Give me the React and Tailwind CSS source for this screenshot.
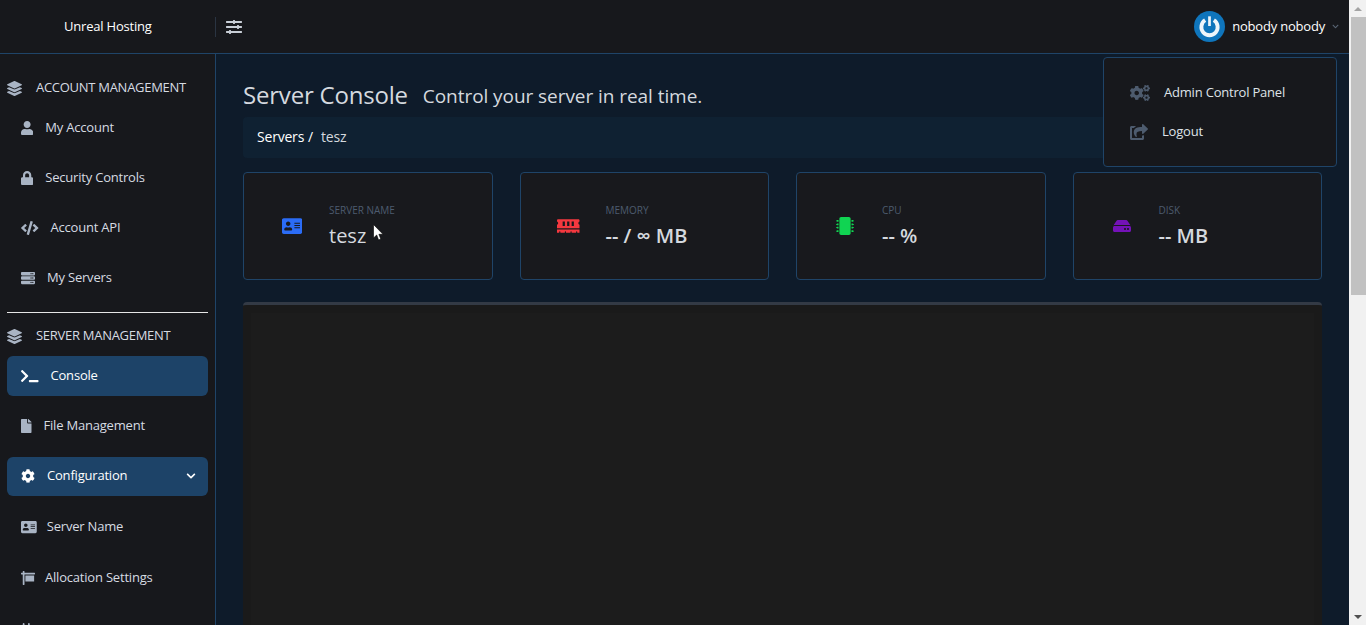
import React from "react";
import {
  FaLayerGroup,
  FaUser,
  FaLock,
  FaCode,
  FaServer,
  FaTerminal,
  FaFile,
  FaCog,
  FaChevronDown,
  FaAddressCard,
  FaSign,
  FaPlug,
  FaSlidersH,
  FaMemory,
  FaMicrochip,
  FaHdd,
  FaCogs,
  FaShareSquare,
} from "react-icons/fa";

const font = { fontFamily: '"Open Sans", sans-serif' };

const NavItem = ({ icon: Icon, label, active, chevron, className, iconClass, gap = "gap-3" }) => (
  <div
    className={`flex items-center ${gap} pl-3.5 pr-3 mx-[7px] rounded-md text-[13px] tracking-[-0.2px] ${
      active ? "bg-[#1d4368] text-white" : "text-[#d6dbe2]"
    } ${className}`}
  >
    <Icon className={`h-3.5 ${iconClass} ${active ? "text-white" : "text-[#a9b4c4]"}`} />
    <span>{label}</span>
    {chevron && <FaChevronDown className="ml-auto h-2.5 w-2.5" />}
  </div>
);

const SectionTitle = ({ label, className }) => (
  <div className={`flex items-center gap-3.5 pl-[7px] text-[13px] tracking-[-0.28px] text-[#d6dbe2] ${className}`}>
    <FaLayerGroup className="h-[15px] w-[15px] text-[#a9b4c4]" />
    <span>{label}</span>
  </div>
);

const StatCard = ({ icon: Icon, color, iconClass, label, value, bold }) => (
  <div className="flex h-[108px] items-center gap-[19px] rounded border border-[#1f4468] bg-[#18191d] pl-[30px]">
    <div className="flex w-[36px] justify-center">
      <Icon className={`shrink-0 ${iconClass} ${color}`} />
    </div>
    <div className="pt-px">
      <div className="text-[10px] leading-[14px] text-[#4d5b6e]">{label}</div>
      <div className={`mt-[5px] text-[20px] leading-[28px] text-[#d5d9df] ${bold ? "font-semibold" : ""}`}>
        {value}
      </div>
    </div>
  </div>
);

export default function App() {
  return (
    <div className="relative flex h-[625px] w-[1366px] overflow-hidden" style={font}>
      <div className="relative flex h-full w-[1349px] flex-col">
        <header className="flex h-[54px] shrink-0 items-center border-b border-[#1f4468] bg-[#17181c]">
          <div className="flex h-[20px] w-[216px] items-center border-r border-[#2a3442] pl-16 text-[13px] tracking-[-0.2px] text-white">
            Unreal Hosting
          </div>
          <FaSlidersH className="ml-2.5 h-4 w-4 text-[#c8ced6]" />
          <div className="ml-auto mr-[10px] flex items-center text-[13px] tracking-[-0.2px] text-white">
            <svg viewBox="0 0 32 32" className="mr-[7px] h-[31px] w-[31px]">
              <circle cx="16" cy="16" r="16" fill="#0f75bc" />
              <path d="M11.5 9.5a8.4 8.4 0 1 0 9 0" fill="none" stroke="#eef5fa" strokeWidth="4" />
              <rect x="14.6" y="5.5" width="2.8" height="10" fill="#eef5fa" />
            </svg>
            <span>nobody nobody</span>
            <FaChevronDown className="ml-[7px] h-[7px] w-[7px] text-[#5a6675]" />
          </div>
        </header>

        <div className="flex min-h-0 flex-1">
          <aside className="w-[216px] shrink-0 overflow-hidden border-r border-[#1f4468] bg-[#17181c]">
            <SectionTitle label="ACCOUNT MANAGEMENT" className="mt-[25px] h-[18px]" />
            <NavItem icon={FaUser} iconClass="w-[12.25px]" label="My Account" className="mt-[11px] h-[40px]" />
            <NavItem icon={FaLock} iconClass="w-[12.25px]" label="Security Controls" className="mt-[10px] h-[40px]" />
            <NavItem icon={FaCode} iconClass="w-[17.5px]" label="Account API" className="mt-[10px] h-[40px]" />
            <NavItem icon={FaServer} iconClass="w-[14px]" label="My Servers" className="mt-[10px] h-[40px]" />
            <div className="mx-[7px] mt-[14px] h-px bg-[#e6e6e6]" />
            <SectionTitle label="SERVER MANAGEMENT" className="mt-[14px] h-[18px]" />
            <NavItem icon={FaTerminal} iconClass="w-[17.5px]" label="Console" active className="mt-[11px] h-[40px]" />
            <NavItem icon={FaFile} iconClass="w-[10.5px]" label="File Management" className="mt-[10px] h-[40px]" />
            <NavItem icon={FaCog} iconClass="w-[14px]" label="Configuration" active chevron className="mt-[11px] h-[39px] pb-0.5" />
            <NavItem icon={FaAddressCard} iconClass="w-[15.75px]" gap="gap-2.5" label="Server Name" className="mt-[11px] h-[40px]" />
            <NavItem icon={FaSign} iconClass="w-[14px]" gap="gap-2.5" label="Allocation Settings" className="mt-[11px] h-[40px]" />
            <NavItem icon={FaPlug} iconClass="w-[10.5px]" label="SFTP Settings" className="mt-[12px] h-[40px]" />
          </aside>

          <main className="flex min-w-0 flex-1 flex-col bg-[#0e1b2a] pl-[27px] pr-[27px]">
            <div className="mt-[23px] flex h-[38px] items-baseline">
              <h1 className="text-[24px] tracking-[-0.2px] text-[#d5d9df]">Server Console</h1>
              <span className="ml-[15px] -translate-y-px text-[19px] tracking-[-0.06px] text-[#d5d9df]">
                Control your server in real time.
              </span>
            </div>
            <div className="mt-[2px] flex h-[41px] items-center rounded bg-[#0f2132] px-3.5 pb-0.5 text-[14px] tracking-[-0.2px] text-[#d5d9df]">
              <span className="text-white">Servers</span>
              <span className="ml-1 text-white">/</span>
              <span className="ml-[8px]">tesz</span>
            </div>
            <div className="mt-[14px] grid grid-cols-4 gap-[27px]">
              <StatCard icon={FaAddressCard} iconClass="h-[18px] w-[20.25px]" color="text-[#2b6cf6]" label="SERVER NAME" value="tesz" />
              <StatCard icon={FaMemory} iconClass="h-[18px] w-[22.5px]" color="text-[#f5383f]" label="MEMORY" value="-- / ∞ MB" bold />
              <StatCard icon={FaMicrochip} iconClass="h-[18px] w-[18px]" color="text-[#10d452]" label="CPU" value="-- %" bold />
              <StatCard icon={FaHdd} iconClass="h-4 w-[18px]" color="text-[#7412b8]" label="DISK" value="-- MB" bold />
            </div>
            <div className="mt-[22px] flex-1 rounded-t border-t-[3px] border-[#333a45] bg-[#1a1a1a] px-2 pt-2">
              <div className="h-full bg-[#1c1c1c]" />
            </div>
          </main>
        </div>

        <div className="absolute left-[1103px] top-[57px] h-[110px] w-[234px] rounded border border-[#1f4468] bg-[#17181c] text-[13px] tracking-[-0.2px] text-[#dfe3e8]">
          <div className="ml-[26px] mt-[25px] flex h-[20px] items-center gap-[14px]">
            <FaCogs className="h-[18px] w-5 text-[#4d5b6e]" />
            <span>Admin Control Panel</span>
          </div>
          <div className="ml-[26px] mt-[19px] flex h-[20px] items-center gap-[14px]">
            <FaShareSquare className="h-[16px] w-[18px] text-[#4d5b6e]" />
            <span>Logout</span>
          </div>
        </div>

        {/* mouse pointer caught in the screenshot */}
        <svg viewBox="0 0 11 17" className="absolute left-[373px] top-[224px] h-[17px] w-[11px]">
          <path d="M0.5 0.5V14L3.7 11L5.6 16L7.8 15L5.9 10.3H10Z" fill="#fff" stroke="#000" strokeWidth="0.6" />
        </svg>
      </div>

      <div className="flex h-full w-[17px] shrink-0 flex-col bg-[#f1f1f1]">
        <div className="flex h-[17px] items-center justify-center">
          <div className="h-0 w-0 border-x-[4px] border-b-[4px] border-x-transparent border-b-[#a3a3a3]" />
        </div>
        <div className="ml-[2px] h-[278px] w-[15px] bg-[#c1c1c1]" />
        <div className="mt-auto flex h-[17px] items-center justify-center">
          <div className="h-0 w-0 border-x-[4px] border-t-[4px] border-x-transparent border-t-[#505050]" />
        </div>
      </div>
    </div>
  );
}
